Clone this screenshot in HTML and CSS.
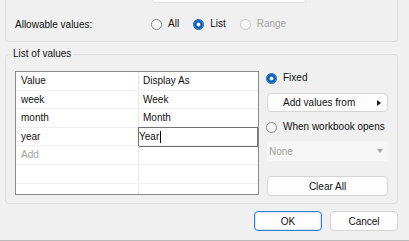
FILE: index.html
```html
<!DOCTYPE html>
<html>
<head>
    <title>Edit Parameter</title>
    <link rel="stylesheet" href="styles.css">
</head>
<body>
    <div class="dialog">
        <div class="fmt-group">
            <div class="fmt-row">
                <span class="fmt-label">Display format:</span>
                <div class="fmt-input"></div>
            </div>
            <div class="allow-row">
                <span class="allow-label">Allowable values:</span>
                <label class="radio-item"><span class="radio"></span>All</label>
                <label class="radio-item"><span class="radio checked"></span>List</label>
                <label class="radio-item disabled"><span class="radio"></span>Range</label>
            </div>
        </div>

        <fieldset class="values-group">
            <legend>List of values</legend>
            <div class="values-body">
                <div class="value-table">
                    <div class="vt-row"><div class="vt-cell">Value</div><div class="vt-cell">Display As</div></div>
                    <div class="vt-row"><div class="vt-cell">week</div><div class="vt-cell">Week</div></div>
                    <div class="vt-row"><div class="vt-cell">month</div><div class="vt-cell">Month</div></div>
                    <div class="vt-row"><div class="vt-cell">year</div><div class="vt-cell edit-cell"><div class="vt-edit">Year<span class="caret"></span></div></div></div>
                    <div class="vt-row"><div class="vt-cell muted">Add</div><div class="vt-cell"></div></div>
                    <div class="vt-row"><div class="vt-cell"></div><div class="vt-cell"></div></div>
                    <div class="vt-row"><div class="vt-cell"></div><div class="vt-cell"></div></div>
                </div>

                <div class="side">
                    <label class="radio-item side-radio"><span class="radio checked"></span>Fixed</label>
                    <button class="btn menu-btn">Add values from<span class="menu-arrow"></span></button>
                    <label class="radio-item side-radio second"><span class="radio"></span>When workbook opens</label>
                    <div class="combo">None<span class="combo-arrow"></span></div>
                    <button class="btn clear-btn">Clear All</button>
                </div>
            </div>
        </fieldset>

        <div class="actions">
            <button class="btn action default">OK</button>
            <button class="btn action">Cancel</button>
        </div>
    </div>
</body>
</html>
```

FILE: styles.css
```css
html, body {
    margin: 0;
    padding: 0;
    overflow: hidden;
}
body {
    font-family: "Segoe UI", "Liberation Sans", sans-serif;
    font-size: 10px;
    color: #111;
    background: #f0f0f0;
}
.dialog {
    width: 409px;
    height: 240px;
    border-bottom: 1px solid #b9b9b9;
    overflow: hidden;
}

/* top group, mostly scrolled out of view */
.fmt-group {
    margin: -18px 11px 0 5px;
    border: 1px solid #dedede;
    border-top: none;
    border-radius: 0 0 4px 4px;
    padding: 0 0 0 9px;
}
.fmt-row {
    display: flex;
    align-items: flex-start;
    height: 21px;
}
.fmt-label {
    width: 137px;
    line-height: 14px;
    margin-top: 5px;
}
.fmt-input {
    width: 155px;
    height: 21px;
    box-sizing: border-box;
    background: #fff;
    border: 1px solid #dcdcdc;
    border-radius: 3px;
}
.allow-row {
    display: flex;
    align-items: center;
    height: 14px;
    padding: 14px 0 10px;
}
.allow-label {
    width: 136px;
}

/* radios */
.radio-item {
    display: inline-flex;
    align-items: center;
    gap: 6px;
    margin-right: 14px;
    line-height: 14px;
    white-space: nowrap;
}
.radio {
    flex: none;
    width: 11px;
    height: 11px;
    box-sizing: border-box;
    border: 1px solid #858585;
    border-radius: 50%;
    background: #f7f7f7;
}
.radio.checked {
    border-color: #005fb8;
    background: #fff;
    box-shadow: inset 0 0 0 2.5px #005fb8;
}
.radio-item.disabled {
    color: #a3a3a3;
}
.radio-item.disabled .radio {
    border-color: #c9c9c9;
}

/* list of values */
.values-group {
    margin: 6px 11px 0 5px;
    padding: 0;
    border: 1px solid #dedede;
    border-radius: 4px;
}
.values-group legend {
    margin-left: 5px;
    padding: 0 2px;
    line-height: 12px;
}
.values-body {
    display: flex;
    gap: 8px;
    padding: 11px 9px 7px 9px;
}
.value-table {
    flex: none;
    width: 244px;
    height: 124px;
    box-sizing: border-box;
    border: 1px solid #8a8a8a;
    background: #fff;
    overflow: hidden;
}
.vt-row {
    display: grid;
    grid-template-columns: 123px 1fr;
    height: 18.6px;
    box-sizing: border-box;
    border-bottom: 1px solid #efefef;
}
.vt-cell {
    padding-left: 5px;
    line-height: 17px;
    border-right: 1px solid #e6e6e6;
}
.vt-cell + .vt-cell {
    padding-left: 4px;
    border-right: none;
}
.vt-cell.muted {
    color: #a3a3a3;
}
.vt-cell.edit-cell {
    padding: 0;
}
.vt-edit {
    display: flex;
    align-items: center;
    margin: -1px 0 0 -1px;
    height: calc(100% + 2px);
    box-sizing: border-box;
    border: 1px solid #707070;
    padding-left: 0;
}
.caret {
    width: 1px;
    height: 12px;
    margin-left: 1px;
    background: #000;
}

/* right column */
.side {
    flex: none;
    width: 121px;
    display: flex;
    flex-direction: column;
}
.side-radio {
    margin: 0 0 0 -1px;
}
.side-radio.second {
    margin-top: 8px;
}
.btn {
    font-family: inherit;
    font-size: inherit;
    color: #111;
    background: #fdfdfd;
    border: 1px solid #d5d5d5;
    border-radius: 4px;
    height: 19px;
    padding: 0;
}
.menu-btn {
    display: flex;
    align-items: center;
    margin-top: 8px;
    padding: 0 6px 0 15px;
}
.menu-arrow {
    margin-left: auto;
    width: 0;
    height: 0;
    border-top: 3.5px solid transparent;
    border-bottom: 3.5px solid transparent;
    border-left: 4px solid #1b1b1b;
}
.combo {
    display: flex;
    align-items: center;
    margin-top: 7px;
    height: 20px;
    box-sizing: border-box;
    padding: 0 5px 0 2px;
    background: #f6f6f6;
    border-radius: 3px;
    color: #a3a3a3;
}
.combo-arrow {
    margin-left: auto;
    width: 0;
    height: 0;
    border-left: 3.5px solid transparent;
    border-right: 3.5px solid transparent;
    border-top: 4px solid #a3a3a3;
}
.clear-btn {
    margin-top: 15px;
    height: 20px;
}

/* dialog buttons */
.actions {
    display: flex;
    justify-content: flex-end;
    gap: 8px;
    margin: 7px 11px 0 0;
}
.action {
    width: 68px;
    height: 20px;
}
.action.default {
    border-color: #2f7fd0;
    box-shadow: inset 0 0 0 1px #d4e6f7;
}
```
